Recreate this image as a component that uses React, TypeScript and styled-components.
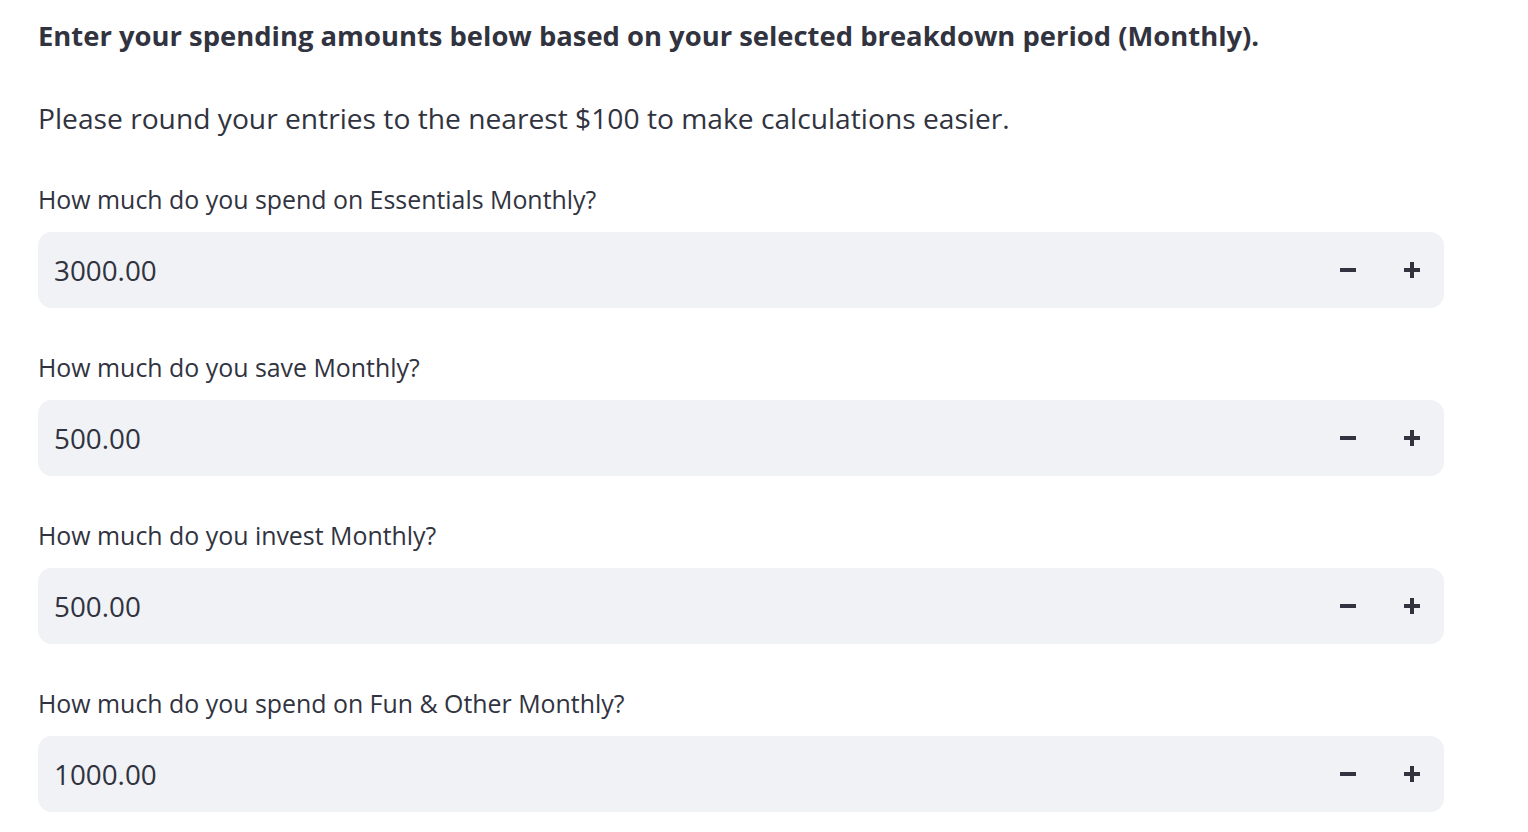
import React from "react";
import styled, { createGlobalStyle } from "styled-components";

const GlobalStyle = createGlobalStyle`
  html, body {
    margin: 0;
    padding: 0;
    background: #ffffff;
  }
  body {
    font-family: "Open Sans", "Noto Sans", sans-serif;
    color: #31333f;
  }
`;

const Page = styled.main`
  display: flex;
  flex-direction: column;
  width: 1406px;
  padding: 16px 0 0 38px;
  box-sizing: content-box;
`;

const Heading = styled.p`
  margin: 0;
  font-size: 27.4px;
  line-height: 40px;
  font-weight: 700;
`;

const Paragraph = styled.p`
  margin: 42px 0 0;
  font-size: 28.2px;
  line-height: 40px;
  font-weight: 400;
`;

const Field = styled.div<{ $first?: boolean }>`
  display: flex;
  flex-direction: column;
  margin-top: ${(p) => (p.$first ? "44px" : "42px")};
`;

const Label = styled.label`
  font-size: 24.9px;
  line-height: 34px;
  font-weight: 400;
  margin-bottom: 16px;
`;

const InputBox = styled.div`
  display: flex;
  align-items: center;
  height: 76px;
  background: #f0f2f6;
  border-radius: 14px;
  overflow: hidden;
`;

const Value = styled.input`
  flex: 1;
  min-width: 0;
  border: none;
  outline: none;
  background: transparent;
  font-family: "Open Sans", "Noto Sans", sans-serif;
  font-size: 27.8px;
  color: #31333f;
  padding: 0 0 0 16px;
  height: 100%;
`;

const StepButton = styled.button`
  display: flex;
  align-items: center;
  justify-content: center;
  width: 64px;
  height: 100%;
  border: none;
  background: transparent;
  padding: 0;
  cursor: pointer;
  color: #31333f;
`;

const Minus = () => (
  <svg width="16" height="16" viewBox="0 0 16 16">
    <rect x="0" y="6" width="16" height="4" fill="currentColor" />
  </svg>
);

const Plus = () => (
  <svg width="16" height="16" viewBox="0 0 16 16">
    <rect x="0" y="6" width="16" height="4" fill="currentColor" />
    <rect x="6" y="0" width="4" height="16" fill="currentColor" />
  </svg>
);

const fields = [
  { label: "How much do you spend on Essentials Monthly?", value: "3000.00" },
  { label: "How much do you save Monthly?", value: "500.00" },
  { label: "How much do you invest Monthly?", value: "500.00" },
  { label: "How much do you spend on Fun & Other Monthly?", value: "1000.00" },
];

export default function App() {
  return (
    <>
      <GlobalStyle />
      <Page>
        <Heading>
          Enter your spending amounts below based on your selected breakdown period (Monthly).
        </Heading>
        <Paragraph>Please round your entries to the nearest $100 to make calculations easier.</Paragraph>
        {fields.map((f, i) => (
          <Field key={f.label} $first={i === 0}>
            <Label>{f.label}</Label>
            <InputBox>
              <Value type="text" defaultValue={f.value} aria-label={f.label} />
              <StepButton aria-label="decrement">
                <Minus />
              </StepButton>
              <StepButton aria-label="increment">
                <Plus />
              </StepButton>
            </InputBox>
          </Field>
        ))}
      </Page>
    </>
  );
}
